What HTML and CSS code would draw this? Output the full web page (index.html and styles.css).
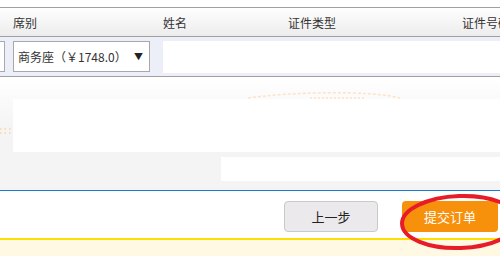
FILE: index.html
```html
<!DOCTYPE html>
<html lang="zh-CN">
<head>
    <meta charset="UTF-8">
    <title>提交订单</title>
    <link rel="stylesheet" href="styles.css">
</head>
<body>
    <div class="page">
        <div class="grid-head">
            <div class="col col-seat">席别</div>
            <div class="col col-name">姓名</div>
            <div class="col col-type">证件类型</div>
            <div class="col col-num">证件号码</div>
        </div>
        <div class="grid-row">
            <div class="prev-cell"></div>
            <div class="seat-select">
                <span>商务座（￥1748.0）</span>
                <span class="arrow">▼</span>
            </div>
            <div class="name-input"></div>
        </div>

        <!-- decorative loading area -->
        <div class="deco">
            <svg class="dots" width="500" height="113" viewBox="0 0 500 113">
                <path d="M0 52 L14 52" stroke="#fcd2a6" stroke-width="1.5" stroke-dasharray="1.5 3" fill="none"/>
                <path d="M0 56 L14 56" stroke="#fcd2a6" stroke-width="1.5" stroke-dasharray="1.5 3" fill="none"/>
                <path d="M248 21 C 290 15, 370 13, 400 21" stroke="#fde3c6" stroke-width="1.5" stroke-dasharray="3 2" fill="none"/>
                <path d="M310 21 L366 21" stroke="#fde3c6" stroke-width="1.5" stroke-dasharray="2 2" fill="none"/>
            </svg>
            <div class="deco-box big"></div>
            <div class="deco-box small"></div>
        </div>

        <div class="actions">
            <button class="btn btn-prev">上一步</button>
            <button class="btn btn-submit">提交订单</button>
            <svg class="mark" width="130" height="64" viewBox="0 0 130 64">
                <ellipse cx="62" cy="30" rx="58" ry="26" fill="none" stroke="#e81c28" stroke-width="4" transform="rotate(-2 62 30)"/>
            </svg>
        </div>
        <div class="notice"></div>
    </div>
</body>
</html>
```

FILE: styles.css
```css
body {
    margin: 0;
    font-family: "Noto Sans CJK SC", "Liberation Sans", sans-serif;
    font-size: 12px;
    color: #333;
    background: #fff;
}
.page {
    width: 500px;
    height: 258px;
    overflow: hidden;
    padding-top: 7px;
    box-sizing: border-box;
    background: #fff;
}
.grid-head {
    display: flex;
    height: 28px;
    align-items: center;
    border-top: 1px solid #a0a0a0;
    border-bottom: 1px solid #a0a0a0;
    background: linear-gradient(#fefefe, #ececec);
    white-space: nowrap;
}
.col {
    flex-shrink: 0;
    box-sizing: border-box;
}
.col-seat {
    width: 150px;
    padding-left: 13px;
}
.col-name {
    width: 123px;
    padding-left: 13px;
}
.col-type {
    width: 177px;
    padding-left: 15px;
}
.col-num {
    padding-left: 12px;
}
.grid-row {
    display: flex;
    height: 39px;
    align-items: center;
    background: #eceff7;
    border-bottom: 1px solid #a0a0a0;
}
.prev-cell {
    flex-shrink: 0;
    width: 4px;
    height: 29px;
    background: #fff;
    border: 1px solid #aaa;
    border-left: none;
    margin-right: 8px;
}
.seat-select {
    flex-shrink: 0;
    width: 137px;
    height: 31px;
    box-sizing: border-box;
    border: 1px solid #a8a8a8;
    background: #fff;
    display: flex;
    align-items: center;
    justify-content: space-between;
    padding: 0 6px 0 4px;
    white-space: nowrap;
}
.seat-select .arrow {
    font-size: 9px;
    color: #222;
}
.name-input {
    flex: 1;
    height: 32px;
    margin-left: 13px;
    background: #fff;
}
.deco {
    position: relative;
    height: 113px;
    padding-top: 22px;
    box-sizing: border-box;
    background: linear-gradient(#ffffff, #f4f4f4 45%, #f4f4f4);
}
.dots {
    position: absolute;
    left: 0;
    top: 0;
}
.deco-box {
    position: relative;
    background: #fff;
}
.deco-box.big {
    margin-left: 13px;
    height: 53px;
}
.deco-box.small {
    margin-left: 221px;
    margin-top: 5px;
    height: 24px;
}
.actions {
    position: relative;
    display: flex;
    justify-content: flex-end;
    gap: 24px;
    height: 50px;
    padding: 10px 2px 0 0;
    box-sizing: border-box;
    background: #fff;
    border-top: 1px solid #1b7bd0;
    border-bottom: 2px solid #ffdf00;
}
.btn {
    height: 31px;
    border-radius: 4px;
    font-family: "Noto Sans CJK SC", sans-serif;
    font-size: 13px;
    cursor: pointer;
}
.btn-prev {
    width: 94px;
    background: #ebe9eb;
    border: 1px solid #c9c9c9;
    color: #222;
}
.btn-submit {
    width: 96px;
    background: #f7900b;
    border: none;
    color: #fff;
}
.mark {
    position: absolute;
    left: 398px;
    top: 1px;
}
.notice {
    height: 16px;
    background: #fff9e3;
}
```
